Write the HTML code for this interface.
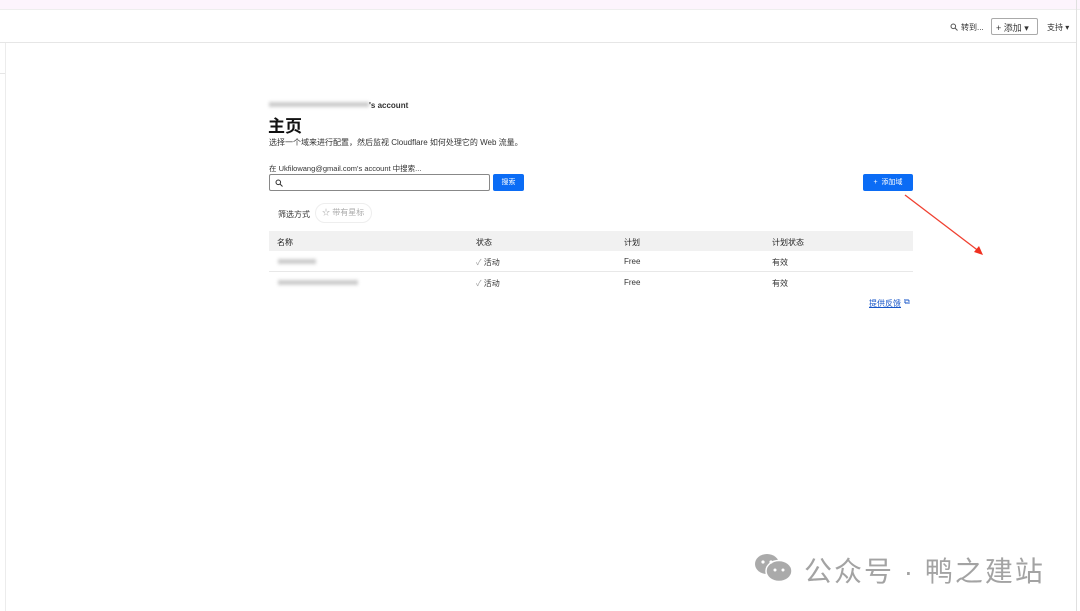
<!DOCTYPE html>
<html><head><meta charset="utf-8"><style>
*{margin:0;padding:0;box-sizing:border-box}
body{width:1080px;height:611px;background:#fff;font-family:"Liberation Sans","Noto Sans CJK SC",sans-serif;color:#222;position:relative;overflow:hidden}
.a{position:absolute}
.t{font-size:8px;white-space:nowrap}
.blur{background:#ccc;filter:blur(1.5px);height:5px}
</style></head><body>
<div class="a" style="left:0;top:0;width:1080px;height:10px;background:#fdf4fd;border-bottom:1px solid #eee"></div>
<div class="a" style="left:0;top:42px;width:1076px;height:1px;background:#e6e6e6"></div>
<div class="a" style="left:5px;top:43px;width:1px;height:568px;background:#ececec"></div>
<div class="a" style="left:0;top:73px;width:5px;height:1px;background:#e6e6e6"></div>
<div class="a" style="left:1076px;top:0;width:1px;height:611px;background:#e0e0e0"></div>
<svg class="a" style="left:950px;top:23px" width="8" height="8"><circle cx="3.3" cy="3.3" r="2.3" fill="none" stroke="#555" stroke-width="1"/><line x1="5" y1="5" x2="7.5" y2="7.5" stroke="#555"/></svg>
<div class="a t" style="left:961px;top:22px;color:#333">转到...</div>
<div class="a" style="left:991px;top:18px;width:47px;height:17px;border:1px solid #aaa;border-radius:2px"></div>
<div class="a t" style="left:996px;top:21px;color:#333;font-size:9px">+ 添加 ▾</div>
<div class="a t" style="left:1047px;top:22px;color:#333">支持 ▾</div>

<div class="a blur" style="left:269px;top:102px;width:100px"></div>
<div class="a t" style="left:369px;top:101px;font-weight:bold;color:#333">'s account</div>
<div class="a" style="left:268px;top:112px;font-size:17px;font-weight:bold;color:#111">主页</div>
<div class="a t" style="left:269px;top:137px;color:#333">选择一个域来进行配置，然后监视 Cloudflare 如何处理它的 Web 流量。</div>
<div class="a t" style="left:269px;top:163px;color:#333;font-size:7.5px">在 Ukfilowang@gmail.com's account 中搜索...</div>
<div class="a" style="left:269px;top:174px;width:221px;height:17px;border:1px solid #888;border-radius:2px"></div>
<svg class="a" style="left:275px;top:179px" width="8" height="8"><circle cx="3.3" cy="3.3" r="2.3" fill="none" stroke="#333" stroke-width="1"/><line x1="5" y1="5" x2="7.5" y2="7.5" stroke="#333"/></svg>
<div class="a" style="left:493px;top:174px;width:31px;height:17px;background:#0b6cf5;border-radius:2px;color:#fff;font-size:7px;text-align:center;line-height:17px">搜索</div>
<div class="a" style="left:863px;top:174px;width:50px;height:17px;background:#0b6cf5;border-radius:2px;color:#fff;font-size:7px;text-align:center;line-height:17px">+&nbsp; 添加域</div>
<div class="a t" style="left:278px;top:209px;color:#333">筛选方式</div>
<div class="a" style="left:315px;top:203px;width:57px;height:20px;border:1px solid #eee;border-radius:10px;font-size:8px;color:#aaa;line-height:18px;padding-left:6px">☆ 带有星标</div>

<div class="a" style="left:269px;top:231px;width:644px;height:20px;background:#f1f1f1"></div>
<div class="a t" style="left:277px;top:237px">名称</div>
<div class="a t" style="left:476px;top:237px">状态</div>
<div class="a t" style="left:624px;top:237px">计划</div>
<div class="a t" style="left:772px;top:237px">计划状态</div>
<div class="a blur" style="left:278px;top:259px;width:38px"></div>
<div class="a t" style="left:476px;top:257px;color:#333"><span style="color:#999">✓</span> 活动</div>
<div class="a t" style="left:624px;top:257px;color:#333">Free</div>
<div class="a t" style="left:772px;top:257px;color:#333">有效</div>
<div class="a" style="left:269px;top:271px;width:644px;height:1px;background:#e8e8e8"></div>
<div class="a blur" style="left:278px;top:280px;width:80px"></div>
<div class="a t" style="left:476px;top:278px;color:#333"><span style="color:#999">✓</span> 活动</div>
<div class="a t" style="left:624px;top:278px;color:#333">Free</div>
<div class="a t" style="left:772px;top:278px;color:#333">有效</div>
<div class="a t" style="left:869px;top:298px;color:#1756c8;text-decoration:underline">提供反馈</div>
<div class="a t" style="left:904px;top:297px;color:#1756c8">⧉</div>

<svg class="a" style="left:900px;top:190px" width="90" height="70"><line x1="5" y1="5" x2="80" y2="62" stroke="#f04030" stroke-width="1.3"/><polygon points="83,65 74,62 79,56" fill="#f03020"/></svg>

<svg class="a" style="left:753px;top:553px" width="42" height="30"><ellipse cx="14" cy="11" rx="12" ry="10" fill="#aaa"/><ellipse cx="26" cy="18" rx="13" ry="10.5" fill="#aaa" stroke="#fff" stroke-width="1.5"/><circle cx="10" cy="9" r="1.6" fill="#fff"/><circle cx="18" cy="9" r="1.6" fill="#fff"/><circle cx="22" cy="17" r="1.5" fill="#fff"/><circle cx="30" cy="17" r="1.5" fill="#fff"/></svg>
<div class="a" style="left:804px;top:550px;font-size:28px;color:#a3a3a3;white-space:nowrap;letter-spacing:2px">公众号 · 鸭之建站</div>
</body></html>
